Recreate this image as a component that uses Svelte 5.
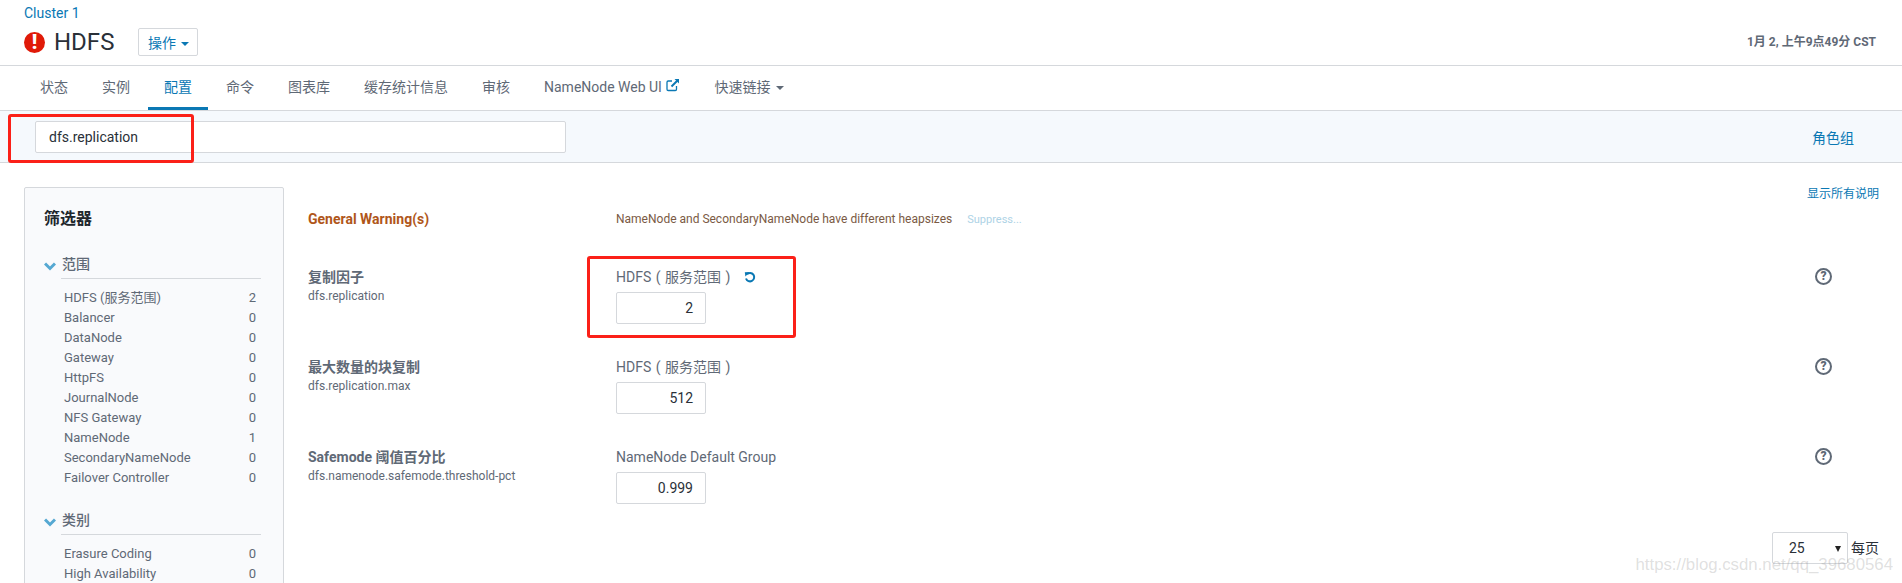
<script>
  const tabs = ['状态', '实例', '配置', '命令', '图表库', '缓存统计信息', '审核'];
  const filters = [
    { name: '范围', items: [['HDFS (服务范围)', 2], ['Balancer', 0], ['DataNode', 0], ['Gateway', 0], ['HttpFS', 0], ['JournalNode', 0], ['NFS Gateway', 0], ['NameNode', 1], ['SecondaryNameNode', 0], ['Failover Controller', 0]] },
    { name: '类别', items: [['Erasure Coding', 0], ['High Availability', 0]] }
  ];
  const rows = [
    { title: '复制因子', key: 'dfs.replication', service: true, scope: 'HDFS ( 服务范围 )', value: '2', reset: true },
    { title: '最大数量的块复制', key: 'dfs.replication.max', service: true, scope: 'HDFS ( 服务范围 )', value: '512' },
    { title: 'Safemode 阈值百分比', key: 'dfs.namenode.safemode.threshold-pct', scope: 'NameNode Default Group', value: '0.999' }
  ];
</script>

<div class="page">
  <header class="header">
    <div>
      <a class="cluster">Cluster 1</a>
      <div class="title-row">
        <span class="alert">!</span>
        <h1>HDFS</h1>
        <button class="action">操作<i class="caret"></i></button>
      </div>
    </div>
    <div class="time">1月 2, 上午9点49分 CST</div>
  </header>

  <nav class="tabs">
    {#each tabs as t}
      <a class="tab" class:active={t === '配置'}>{t}</a>
    {/each}
    <a class="tab">NameNode Web UI
      <svg class="ext" viewBox="0 0 14 14" width="14" height="14" fill="none" stroke="#0a78b4" stroke-width="1.3">
        <path d="M10.5 8v3.3a1.2 1.2 0 0 1-1.2 1.2H2.2A1.2 1.2 0 0 1 1 11.3V4.2A1.2 1.2 0 0 1 2.2 3H6" />
        <path d="M5.5 8.5 12 2" stroke-width="2" />
        <path d="M8.5 1h4.5v4.5z" fill="#0a78b4" stroke="none" />
      </svg>
    </a>
    <a class="tab">快速链接<i class="caret grey"></i></a>
  </nav>

  <section class="band">
    <div class="search">dfs.replication</div>
    <a class="roles">角色组</a>
  </section>

  <main class="body">
    <aside class="panel">
      <h2>筛选器</h2>
      {#each filters as f}
        <div class="group">
          <svg class="chev" viewBox="0 0 12 9" width="12" height="9" fill="none" stroke="#55a8d2" stroke-width="3">
            <path d="M1 1.5 6 6.5 11 1.5" />
          </svg>
          <span class="group-name">{f.name}</span>
        </div>
        <ul>
          {#each f.items as it}
            <li><span>{it[0]}</span><span>{it[1]}</span></li>
          {/each}
        </ul>
      {/each}
    </aside>

    <div class="content">
      <a class="show-all">显示所有说明</a>
      <div class="warn">
        <strong>General Warning(s)</strong>
        <p>NameNode and SecondaryNameNode have different heapsizes <a>Suppress...</a></p>
      </div>
      {#each rows as r}
        <div class="row">
          <div>
            <div class="row-title">{r.title}</div>
            <div class="row-key">{r.key}</div>
          </div>
          <div>
            <div class="scope" class:service={r.service}>{r.scope}
              {#if r.reset}
                <svg class="reset" viewBox="0 0 12 12" width="12" height="12" fill="none" stroke="#0a78b4" stroke-width="2">
                  <path d="M3 3.2A4.2 4.2 0 1 1 2 7.5" />
                  <path d="M0.8 1.2 5.6 0.9 1.4 5.6z" fill="#0a78b4" stroke="none" />
                </svg>
              {/if}
            </div>
            <div class="val">{r.value}</div>
          </div>
          <span class="help">?</span>
        </div>
      {/each}
      <div class="pager">
        <div class="select">25<i class="tri"></i></div>
        <span>每页</span>
      </div>
    </div>
  </main>

  <div class="mark m1"></div>
  <div class="mark m2"></div>
  <div class="watermark">https://blog.csdn.net/qq_39680564</div>
</div>

<style>
  :global(body) { margin: 0; background: #fff; }
  .page {
    position: relative;
    width: 1902px;
    height: 583px;
    overflow: hidden;
    font-family: Roboto, "Noto Sans CJK SC", sans-serif;
    font-size: 14px;
    color: #5f6976;
  }
  a { color: #0a78b4; }
  .header {
    height: 65px;
    box-sizing: border-box;
    padding: 0 26px 0 24px;
    display: flex;
    justify-content: space-between;
  }
  .cluster { display: block; height: 26px; line-height: 26px; font-size: 14px; }
  .title-row { display: flex; align-items: center; height: 32px; }
  .alert {
    width: 21px;
    height: 21px;
    border-radius: 50%;
    background: #e01a08;
    color: #fff;
    font-weight: 900;
    font-size: 20px;
    line-height: 21px;
    text-align: center;
  }
  h1 { margin: 0 24px 0 9px; font-size: 24px; font-weight: 400; color: #2a3038; }
  .action {
    height: 28px;
    width: 60px;
    padding: 0;
    background: #fff;
    border: 1px solid #d5d8dc;
    border-radius: 2px;
    color: #0a78b4;
    font: inherit;
  }
  .caret {
    display: inline-block;
    margin-left: 5px;
    vertical-align: middle;
    border-left: 4px solid transparent;
    border-right: 4px solid transparent;
    border-top: 4px solid #0a78b4;
  }
  .caret.grey { border-top-color: #5f6976; margin-left: 6px; }
  .time { margin-top: 33px; font-size: 12px; font-weight: 700; line-height: 18px; color: #5f6976; }
  .tabs {
    height: 44px;
    display: flex;
    padding-left: 24px;
    gap: 2px;
    border-top: 1px solid #d5d8dc;
    border-bottom: 1px solid #d5d8dc;
  }
  .tab {
    padding: 0 16px;
    line-height: 42px;
    color: #5f6976;
    white-space: nowrap;
    border-bottom: 3px solid transparent;
    height: 41px;
  }
  .tab.active { color: #0a78b4; border-bottom-color: #0a78b4; }
  .ext { vertical-align: 0; margin-left: 1px; }
  .band {
    height: 51px;
    background: #f5f9fd;
    border-bottom: 1px solid #d5d8dc;
    display: flex;
    align-items: center;
    justify-content: space-between;
    padding: 0 48px 0 35px;
  }
  .search {
    width: 531px;
    height: 32px;
    box-sizing: border-box;
    background: #fff;
    border: 1px solid #d5d8dc;
    border-radius: 2px;
    padding-left: 13px;
    line-height: 30px;
    color: #2a3038;
  }
  .body { display: flex; }
  .panel {
    width: 260px;
    height: 500px;
    box-sizing: border-box;
    flex: none;
    margin: 24px 0 0 24px;
    padding: 19px 22px 0 19px;
    background: #f9fafc;
    border: 1px solid #d5d8dc;
    border-radius: 2px;
  }
  h2 { margin: 0 0 23px; font-size: 16px; line-height: 24px; font-weight: 700; color: #20262c; }
  .group { display: flex; align-items: center; height: 24px; }
  .chev { margin-right: 5px; flex: none; }
  .group-name {
    flex: 1;
    font-weight: 500;
    line-height: 20px;
    height: 24px;
    padding-left: 1px;
    border-bottom: 1px solid #d5d8dc;
  }
  ul { list-style: none; margin: 10px 0 22px; padding: 0 5px 0 20px; }
  li { display: flex; justify-content: space-between; height: 20px; line-height: 20px; font-size: 13px; }
  .content { flex: 1; padding: 22px 23px 0 24px; }
  .show-all { display: block; text-align: right; font-size: 12px; line-height: 18px; }
  .warn { display: grid; grid-template-columns: 308px 1fr; margin: 6px 0 38px; align-items: center; height: 20px; }
  .warn strong { color: #b0561a; font-weight: 700; font-size: 14px; }
  .warn p { margin: 0; font-size: 12px; color: #7a5a44; }
  .warn a { margin-left: 12px; color: #aed3e6; font-size: 11px; }
  .row { display: grid; grid-template-columns: 308px 1fr 16px; padding-right: 48px; margin-bottom: 33px; height: 57px; }
  .row-title { font-weight: 700; line-height: 20px; color: #5f6976; font-size: 14px; }
  .row-key { font-size: 12px; line-height: 18px; }
  .scope { line-height: 20px; height: 20px; margin-bottom: 5px; }
  .scope.service { word-spacing: 1px; }
  .reset { margin-left: 9px; vertical-align: -1px; }
  .val {
    width: 90px;
    height: 32px;
    box-sizing: border-box;
    border: 1px solid #d5d8dc;
    border-radius: 2px;
    padding-right: 12px;
    text-align: right;
    line-height: 30px;
    color: #2a3038;
  }
  .help {
    width: 17px;
    height: 17px;
    box-sizing: border-box;
    border: 2px solid #5f6976;
    border-radius: 50%;
    text-align: center;
    font-size: 12px;
    font-weight: 900;
    line-height: 13px;
    margin-top: 1px;
  }
  .pager { display: flex; justify-content: flex-end; align-items: center; gap: 3px; margin-top: -5px; color: #2a3038; }
  .pager span { margin-top: -2px; }
  .select {
    position: relative;
    width: 76px;
    height: 32px;
    box-sizing: border-box;
    border: 1px solid #d5d8dc;
    border-radius: 2px;
    padding-left: 16px;
    line-height: 30px;
  }
  .tri {
    position: absolute;
    right: 6px;
    top: 13px;
    border-left: 3.5px solid transparent;
    border-right: 3.5px solid transparent;
    border-top: 6px solid #222;
  }
  .mark { position: absolute; border: 3px solid #fb2018; border-radius: 3px; box-sizing: border-box; }
  .m1 { left: 8px; top: 114px; width: 186px; height: 49px; }
  .m2 { left: 587px; top: 256px; width: 209px; height: 82px; }
  .watermark {
    position: absolute;
    right: 9px;
    top: 556px;
    font-family: "Liberation Sans", sans-serif;
    font-size: 16.8px;
    line-height: 18px;
    color: rgba(150, 150, 150, 0.3);
  }
</style>
